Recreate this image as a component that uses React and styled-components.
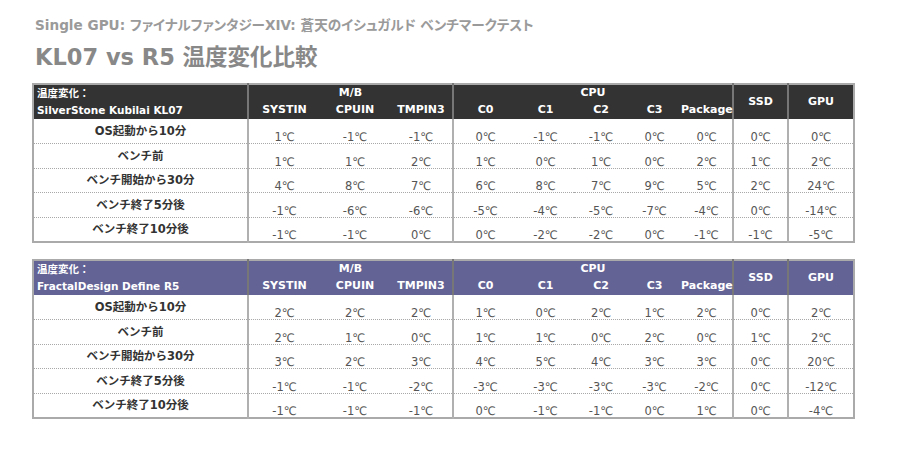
import React from 'react'
import styled, { createGlobalStyle } from 'styled-components'

const GlobalStyle = createGlobalStyle`
  body {
    margin: 0;
    background: #ffffff;
    font-family: 'DejaVu Sans', 'Noto Sans CJK JP', sans-serif;
  }
`

const Page = styled.div`
  width: 900px;
  height: 450px;
  padding: 16px 0 0 32px;
  box-sizing: border-box;
  display: flex;
  flex-direction: column;
`

const SubTitle = styled.div`
  font-size: 13.6px;
  font-weight: bold;
  color: #9a9a9a;
  line-height: 18px;
  padding-left: 3px;
  font-feature-settings: 'palt';
`

const Title = styled.h1`
  margin: 9px 0 0;
  font-size: 22.5px;
  font-weight: bold;
  color: #888888;
  line-height: 28px;
  padding-left: 3px;
`

const Table = styled.table`
  width: 821px;
  table-layout: fixed;
  border-collapse: collapse;
  border: 2px solid #aaaaaa;
  margin-top: ${(p) => p.$top}px;
`

const HeadCell = styled.th`
  background: ${(p) => p.$bg};
  color: #ffffff;
  font-size: 11px;
  font-weight: bold;
  padding: 0;
  white-space: nowrap;
  text-align: ${(p) => (p.$left ? 'left' : 'center')};
  border-left: ${(p) => (p.$sep ? '2px solid #777777' : 'none')};
  height: ${(p) => p.$h || 17}px;
  line-height: 16px;
`

const LabelHead = styled(HeadCell)`
  padding-left: 3px;
  vertical-align: middle;
  line-height: 17px;
  font-size: 10.5px;
`

const Row = styled.tr`
  height: 24.6px;
  border-top: ${(p) => (p.$first ? 'none' : '1px dotted #a8a8a8')};
`

const Label = styled.td`
  font-size: 11.5px;
  font-weight: bold;
  color: #333333;
  text-align: center;
  vertical-align: middle;
  padding: 0;
  line-height: 16px;
  white-space: nowrap;
`

const Value = styled.td`
  font-size: 11.5px;
  color: #555555;
  text-align: center;
  vertical-align: bottom;
  padding: 0;
  line-height: 12px;
  white-space: nowrap;
  border-left: ${(p) => (p.$sep ? '2px solid #b0b0b0' : 'none')};
`

const widths = [215, 72, 70, 63, 64, 57, 54, 53, 52, 55, 66]
const seps = [false, true, false, false, true, false, false, false, false, true, true]

const rowLabels = ['OS起動から10分', 'ベンチ前', 'ベンチ開始から30分', 'ベンチ終了5分後', 'ベンチ終了10分後']

const kl07 = [
  [1, -1, -1, 0, -1, -1, 0, 0, 0, 0],
  [1, 1, 2, 1, 0, 1, 0, 2, 1, 2],
  [4, 8, 7, 6, 8, 7, 9, 5, 2, 24],
  [-1, -6, -6, -5, -4, -5, -7, -4, 0, -14],
  [-1, -1, 0, 0, -2, -2, 0, -1, -1, -5],
]

const r5 = [
  [2, 2, 2, 1, 0, 2, 1, 2, 0, 2],
  [2, 1, 0, 1, 1, 0, 2, 0, 1, 2],
  [3, 2, 3, 4, 5, 4, 3, 3, 0, 20],
  [-1, -1, -2, -3, -3, -3, -3, -2, 0, -12],
  [-1, -1, -1, 0, -1, -1, 0, 1, 0, -4],
]

const TempTable = ({ name, bg, data, top }) => (
  <Table $top={top}>
    <colgroup>
      {widths.map((w, i) => (
        <col key={i} style={{ width: w }} />
      ))}
    </colgroup>
    <thead>
      <tr>
        <LabelHead $bg={bg} $left rowSpan={2}>
          温度変化：
          <br />
          {name}
        </LabelHead>
        <HeadCell $bg={bg} $sep colSpan={3} $h={16}>
          M/B
        </HeadCell>
        <HeadCell $bg={bg} $sep colSpan={5} $h={16}>
          CPU
        </HeadCell>
        <HeadCell $bg={bg} $sep rowSpan={2}>
          SSD
        </HeadCell>
        <HeadCell $bg={bg} $sep rowSpan={2}>
          GPU
        </HeadCell>
      </tr>
      <tr>
        <HeadCell $bg={bg} $sep $h={18}>SYSTIN</HeadCell>
        <HeadCell $bg={bg} $h={18}>CPUIN</HeadCell>
        <HeadCell $bg={bg} $h={18}>TMPIN3</HeadCell>
        <HeadCell $bg={bg} $sep $h={18}>C0</HeadCell>
        <HeadCell $bg={bg} $h={18}>C1</HeadCell>
        <HeadCell $bg={bg} $h={18}>C2</HeadCell>
        <HeadCell $bg={bg} $h={18}>C3</HeadCell>
        <HeadCell $bg={bg} $h={18}>Package</HeadCell>
      </tr>
    </thead>
    <tbody>
      {data.map((row, r) => (
        <Row key={r} $first={r === 0}>
          <Label>{rowLabels[r]}</Label>
          {row.map((v, c) => (
            <Value key={c} $sep={seps[c + 1]}>
              {v}℃
            </Value>
          ))}
        </Row>
      ))}
    </tbody>
  </Table>
)

const App = () => (
  <Page>
    <GlobalStyle />
    <SubTitle>Single GPU: ファイナルファンタジーXIV: 蒼天のイシュガルド ベンチマークテスト</SubTitle>
    <Title>KL07 vs R5 温度変化比較</Title>
    <TempTable name='SilverStone Kubilai KL07' bg='#333333' data={kl07} top={12} />
    <TempTable name='FractalDesign Define R5' bg='#636396' data={r5} top={16} />
  </Page>
)

export default App
